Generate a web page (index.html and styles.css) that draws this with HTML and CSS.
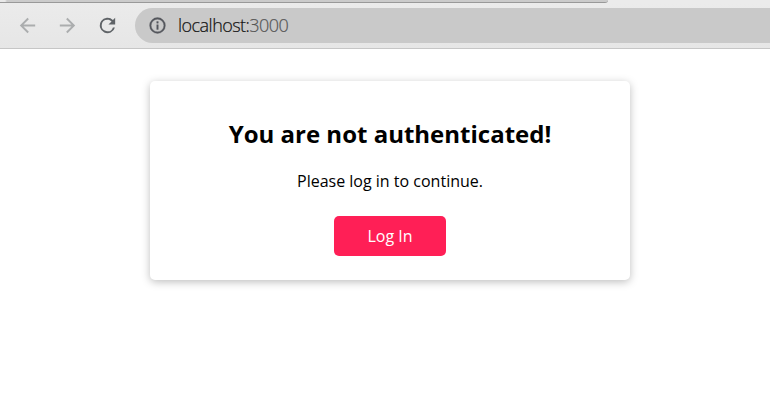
FILE: index.html
```html
<!DOCTYPE html>
<html lang="en">
<head>
<meta charset="utf-8">
<title>Log In</title>
<link rel="stylesheet" href="styles.css">
</head>
<body>
<div class="tabs"><div class="tabs-edge"></div></div>
<header class="toolbar">
  <svg class="icon muted" viewBox="0 0 24 24"><path d="M20 11H7.83l5.59-5.59L12 4l-8 8 8 8 1.41-1.41L7.83 13H20z"/></svg>
  <svg class="icon muted" viewBox="0 0 24 24"><path d="M4 11h12.17l-5.59-5.59L12 4l8 8-8 8-1.41-1.41L16.17 13H4z"/></svg>
  <svg class="icon" viewBox="0 0 24 24"><path d="M17.65 6.35A8 8 0 1 0 19.73 14h-2.08A6 6 0 1 1 12 6c1.66 0 3.14.69 4.22 1.78L13 11h7V4z"/></svg>
  <div class="address">
    <svg class="info" viewBox="0 0 24 24"><path d="M11 7h2v2h-2zm0 4h2v6h-2zm1-9a10 10 0 1 0 0 20 10 10 0 0 0 0-20zm0 18a8 8 0 1 1 0-16 8 8 0 0 1 0 16z"/></svg>
    <span class="url">localhost:<span class="port">3000</span></span>
  </div>
</header>
<main class="card">
  <h1>You are not authenticated!</h1>
  <p>Please log in to continue.</p>
  <button class="login">Log In</button>
</main>
</body>
</html>
```
FILE: styles.css
```css
* { box-sizing: border-box; }
body { margin: 0; min-height: 100vh; background: #fff; color: #000; font-family: "Open Sans", sans-serif; }
.tabs { height: 3px; background: #ebebeb; }
.tabs-edge { width: 608px; height: 3px; border-bottom: 1px solid #999; border-radius: 0 0 5px 0; background: linear-gradient(90deg, #e8e8e8 5px, #cbcbcb 7px); }
.toolbar { height: 46px; display: flex; align-items: center; padding-left: 16px; gap: 17px; background: linear-gradient(#ebebeb, #e6e6e6); border-bottom: 1px solid #c6c6c6; }
.icon { width: 23px; height: 23px; flex: none; fill: #5f6367; }
.muted { fill: #abadae; }
.address { flex: 1; height: 35px; margin-left: -1px; padding-left: 13px; display: flex; align-items: center; gap: 11px; background: #c9c9c9; border-radius: 18px 0 0 18px; }
.info { width: 19px; height: 19px; fill: #54565c; stroke: #54565c; stroke-width: .4; }
.url { margin-top: -1px; font-size: 18px; font-weight: 300; letter-spacing: -.53px; color: #111; -webkit-text-stroke: .2px; }
.port { color: #555; }
.card { width: 480px; height: 199px; margin: 32px auto 0 150px; padding-top: 36px; display: flex; flex-direction: column; align-items: center; border-radius: 5px; box-shadow: 0 2px 8px rgba(0,0,0,.26); }
h1 { margin: 0; font-size: 24px; line-height: 34px; font-weight: 700; }
p { margin: 18px 0 0; font-size: 16px; line-height: 24px; }
.login { width: 112px; height: 40px; margin-top: 23px; padding: 0; border: 0; border-radius: 5px; background: #ff1f56; color: #fff; font: 16px "Open Sans", sans-serif; }
```
